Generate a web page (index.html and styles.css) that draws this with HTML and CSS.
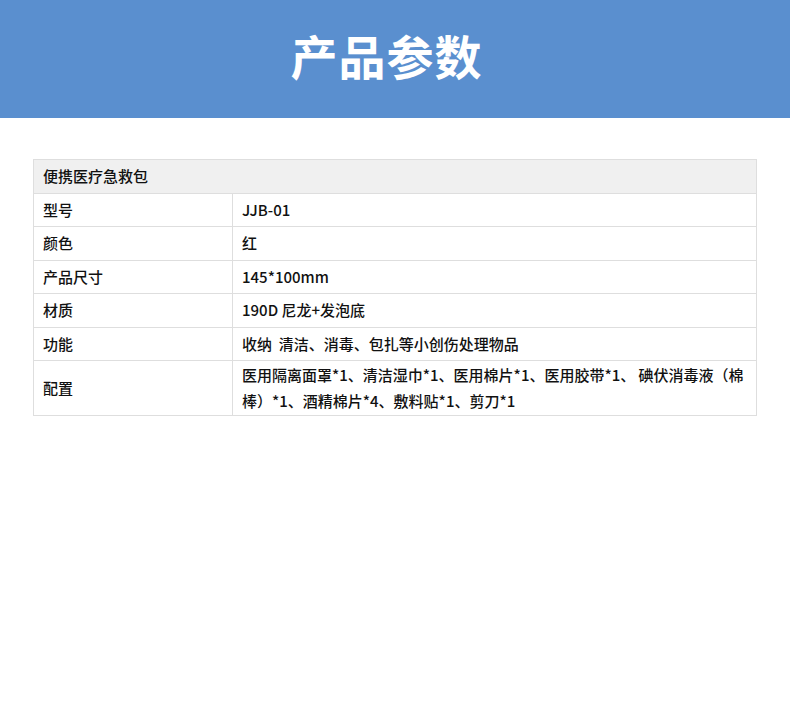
FILE: index.html
```html
<!DOCTYPE html>
<html lang="zh">
<head>
<meta charset="utf-8">
<link rel="stylesheet" href="styles.css">
</head>
<body>
<header class="banner"><h1 class="banner-title">产品参数</h1></header>
<main class="content">
<table class="spec">
<thead>
<tr><th colspan="2" class="spec-head">便携医疗急救包</th></tr>
</thead>
<tbody>
<tr><td class="key">型号</td><td class="val">JJB-01</td></tr>
<tr><td class="key">颜色</td><td class="val">红</td></tr>
<tr><td class="key">产品尺寸</td><td class="val">145*100mm</td></tr>
<tr><td class="key">材质</td><td class="val">190D 尼龙+发泡底</td></tr>
<tr><td class="key">功能</td><td class="val">收纳&nbsp; 清洁、消毒、包扎等小创伤处理物品</td></tr>
<tr class="tall"><td class="key">配置</td><td class="val">医用隔离面罩*1、清洁湿巾*1、医用棉片*1、医用胶带*1、 碘伏消毒液（棉棒）*1、酒精棉片*4、敷料贴*1、剪刀*1</td></tr>
</tbody>
</table>
</main>
</body>
</html>
```
FILE: styles.css
```css
html, body {
  margin: 0;
  padding: 0;
  background: #ffffff;
  font-family: "Noto Sans CJK SC", "Noto Sans", sans-serif;
  color: #111111;
}
.banner {
  height: 118px;
  background: #5a8fcf;
  display: flex;
  align-items: center;
  justify-content: center;
}
.banner-title {
  margin: 0;
  color: #ffffff;
  font-size: 47px;
  font-weight: 700;
  letter-spacing: 1px;
  line-height: 1;
  padding: 0 17px 9px 0;
}
.content {
  padding: 41px 33px 0 33px;
}
.spec {
  width: 724px;
  border-collapse: collapse;
  font-size: 15px;
}
.spec th, .spec td {
  border: 1px solid #dedede;
  text-align: left;
  vertical-align: middle;
  line-height: 26px;
  padding: 3.25px 9px;
  font-weight: 500;
}
.spec-head {
  background: #f0f0f0;
  padding-top: 4px;
  padding-bottom: 3.5px;
}
.tall td {
  padding-top: 1px;
  padding-bottom: 1px;
}
.key {
  width: 180px;
}
```
